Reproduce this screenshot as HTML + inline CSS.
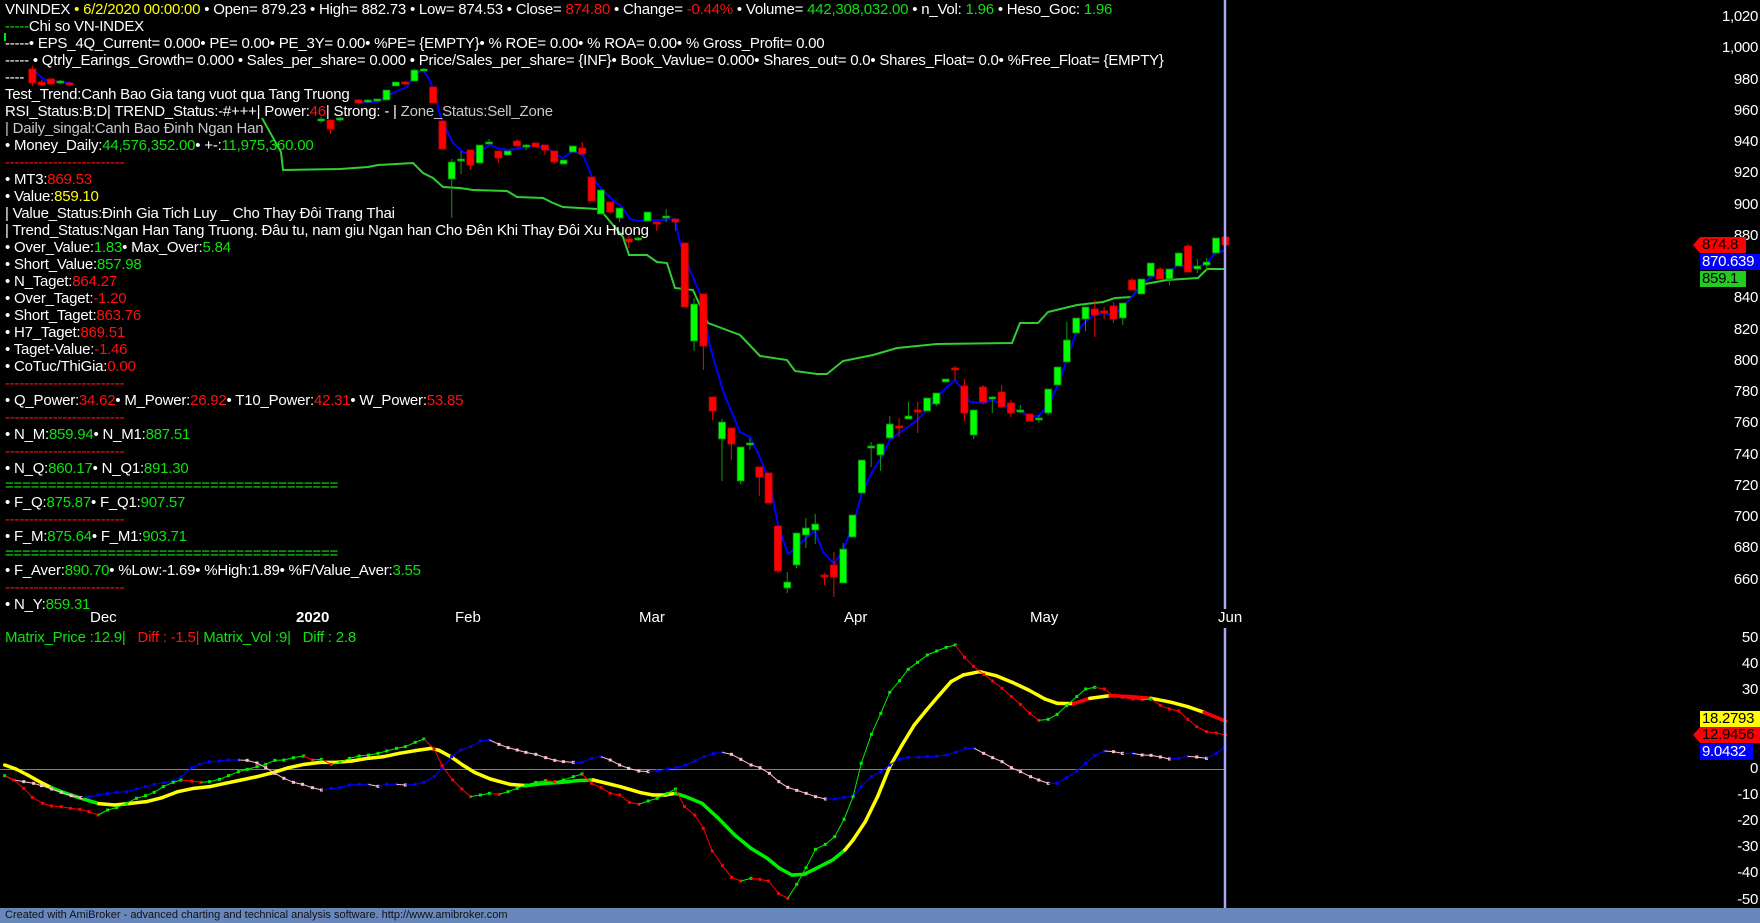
<!DOCTYPE html>
<html><head><meta charset="utf-8">
<style>
html,body{margin:0;padding:0;background:#000;}
body{width:1760px;height:923px;overflow:hidden;position:relative;font-family:"Liberation Sans",Arial,sans-serif;}
#svg{position:absolute;left:0;top:0;}
.t{position:absolute;left:5px;white-space:pre;font-size:15px;line-height:17px;color:#fff;letter-spacing:-0.22px;margin-top:1px;}
.w{color:#fff}.y{color:#ffff00}.r{color:#ff1010}.g{color:#10e010}.s{color:#c8c8c8}
.ax{position:absolute;right:2px;font-size:15px;line-height:17px;color:#fff;text-align:right;letter-spacing:-0.3px;}
.dt{position:absolute;font-size:15px;line-height:17px;color:#fff;}
.tag{position:absolute;font-size:15px;line-height:16px;height:16px;padding:0 2px;text-align:left;letter-spacing:-0.3px;}
#bar{position:absolute;left:0;top:908px;width:1760px;height:15px;background:#6888bc;font-size:11px;line-height:15px;color:#111;padding-left:5px;box-sizing:border-box;}
</style></head><body>
<svg id="svg" width="1760" height="923" xmlns="http://www.w3.org/2000/svg"></svg>

<div class="t" style="top:0px"><span class="w">VNINDEX</span><span class="y"> • 6/2/2020 00:00:00</span> • Open= 879.23 • High= 882.73 • Low= 874.53 • Close= <span class="r">874.80</span> • Change= <span class="r">-0.44%</span> • Volume= <span class="g">442,308,032.00</span> • n_Vol: <span class="g">1.96</span> • Heso_Goc: <span class="g">1.96</span></div>
<div class="t" style="top:17px"><span class="g">-----</span>Chi so VN-INDEX</div>
<div class="t" style="top:34px">-----• EPS_4Q_Current= 0.000• PE= 0.00• PE_3Y= 0.00• %PE= {EMPTY}• % ROE= 0.00• % ROA= 0.00• % Gross_Profit= 0.00</div>
<div class="t" style="top:51px">----- • Qtrly_Earings_Growth= 0.000 • Sales_per_share= 0.000 • Price/Sales_per_share= {INF}• Book_Vavlue= 0.000• Shares_out= 0.0• Shares_Float= 0.0• %Free_Float= {EMPTY}</div>
<div class="t" style="top:68px">----</div>
<div class="t" style="top:85px">Test_Trend:Canh Bao Gia tang vuot qua Tang Truong</div>
<div class="t" style="top:102px">RSI_Status:B:D| TREND_Status:-#+++| Power:<span class="r">46</span>| Strong: - | <span class="s">Zone_Status:Sell_Zone</span></div>
<div class="t s" style="top:119px">| Daily_singal:Canh Bao Đinh Ngan Han</div>
<div class="t" style="top:136px">• Money_Daily:<span class="g">44,576,352.00</span>• +-:<span class="g">11,975,360.00</span></div>
<div class="t r" style="top:153px">-------------------------</div>
<div class="t" style="top:170px">• MT3:<span class="r">869.53</span></div>
<div class="t" style="top:187px">• Value:<span class="y">859.10</span></div>
<div class="t" style="top:204px">| Value_Status:Đinh Gia Tich Luy _ Cho Thay Đôi Trang Thai</div>
<div class="t" style="top:221px">| Trend_Status:Ngan Han Tang Truong. Đâu tu, nam giu Ngan han Cho Đên Khi Thay Đôi Xu Huong</div>
<div class="t" style="top:238px">• Over_Value:<span class="g">1.83</span>• Max_Over:<span class="g">5.84</span></div>
<div class="t" style="top:255px">• Short_Value:<span class="g">857.98</span></div>
<div class="t" style="top:272px">• N_Taget:<span class="r">864.27</span></div>
<div class="t" style="top:289px">• Over_Taget:<span class="r">-1.20</span></div>
<div class="t" style="top:306px">• Short_Taget:<span class="r">863.76</span></div>
<div class="t" style="top:323px">• H7_Taget:<span class="r">869.51</span></div>
<div class="t" style="top:340px">• Taget-Value:<span class="r">-1.46</span></div>
<div class="t" style="top:357px">• CoTuc/ThiGia:<span class="r">0.00</span></div>
<div class="t r" style="top:374px">-------------------------</div>
<div class="t" style="top:391px">• Q_Power:<span class="r">34.62</span>• M_Power:<span class="r">26.92</span>• T10_Power:<span class="r">42.31</span>• W_Power:<span class="r">53.85</span></div>
<div class="t r" style="top:408px">-------------------------</div>
<div class="t" style="top:425px">• N_M:<span class="g">859.94</span>• N_M1:<span class="g">887.51</span></div>
<div class="t r" style="top:442px">-------------------------</div>
<div class="t" style="top:459px">• N_Q:<span class="g">860.17</span>• N_Q1:<span class="g">891.30</span></div>
<div class="t g" style="top:476px">=======================================</div>
<div class="t" style="top:493px">• F_Q:<span class="g">875.87</span>• F_Q1:<span class="g">907.57</span></div>
<div class="t r" style="top:510px">-------------------------</div>
<div class="t" style="top:527px">• F_M:<span class="g">875.64</span>• F_M1:<span class="g">903.71</span></div>
<div class="t g" style="top:544px">=======================================</div>
<div class="t" style="top:561px">• F_Aver:<span class="g">890.70</span>• %Low:-1.69• %High:1.89• %F/Value_Aver:<span class="g">3.55</span></div>
<div class="t r" style="top:578px">-------------------------</div>
<div class="t" style="top:595px">• N_Y:<span class="g">859.31</span></div>

<div class="dt" style="left:90px;top:609px">Dec</div>
<div class="dt" style="left:296px;top:609px;font-weight:bold">2020</div>
<div class="dt" style="left:455px;top:609px">Feb</div>
<div class="dt" style="left:639px;top:609px">Mar</div>
<div class="dt" style="left:844px;top:609px">Apr</div>
<div class="dt" style="left:1030px;top:609px">May</div>
<div class="dt" style="left:1218px;top:609px">Jun</div>

<div class="t" style="top:628px"><span class="g">Matrix_Price :12.9|</span>   <span class="r">Diff : -1.5|</span><span class="g"> Matrix_Vol :9|   Diff : 2.8</span></div>

<div class="ax" style="top:8px">1,020</div>
<div class="ax" style="top:39px">1,000</div>
<div class="ax" style="top:71px">980</div>
<div class="ax" style="top:102px">960</div>
<div class="ax" style="top:133px">940</div>
<div class="ax" style="top:164px">920</div>
<div class="ax" style="top:196px">900</div>
<div class="ax" style="top:227px">880</div>
<div class="ax" style="top:289px">840</div>
<div class="ax" style="top:321px">820</div>
<div class="ax" style="top:352px">800</div>
<div class="ax" style="top:383px">780</div>
<div class="ax" style="top:414px">760</div>
<div class="ax" style="top:446px">740</div>
<div class="ax" style="top:477px">720</div>
<div class="ax" style="top:508px">700</div>
<div class="ax" style="top:539px">680</div>
<div class="ax" style="top:571px">660</div>

<div class="ax" style="top:629px">50</div>
<div class="ax" style="top:655px">40</div>
<div class="ax" style="top:681px">30</div>
<div class="ax" style="top:760px">0</div>
<div class="ax" style="top:786px">-10</div>
<div class="ax" style="top:812px">-20</div>
<div class="ax" style="top:838px">-30</div>
<div class="ax" style="top:864px">-40</div>
<div class="ax" style="top:891px">-50</div>

<div class="tag" style="left:1700px;top:237px;width:42px;background:#ff0000;color:#000">874.8</div>
<div class="tag" style="left:1700px;top:254px;width:56px;background:#0000ff;color:#fff">870.639</div>
<div class="tag" style="left:1700px;top:271px;width:42px;background:#22cc22;color:#000">859.1</div>
<div class="tag" style="left:1700px;top:711px;width:56px;background:#ffff00;color:#000">18.2793</div>
<div class="tag" style="left:1700px;top:727px;width:56px;background:#ff0000;color:#000">12.9456</div>
<div class="tag" style="left:1700px;top:744px;width:49px;background:#0000ff;color:#fff">9.0432</div>

<div id="bar">Created with AmiBroker - advanced charting and technical analysis software. http://www.amibroker.com</div>

<script>
(function(){
var S=document.getElementById('svg'),h='';
function X(k){return 1225.3-9.32*k;}
h+='<polygon points="1693,245 1700,237 1700,253" fill="#ff0000"/>';
h+='<polygon points="1693,735 1700,727 1700,743" fill="#ff0000"/>';
h+='<line x1="0" y1="769.5" x2="1225" y2="769.5" stroke="#808080" stroke-width="1"/>';
var gp=[[262,118],[281,152],[283,170],[340,169],[368,167],[378,165],[413,163],[423,173],[433,178],[443,187],[460,188],[473,190],[507,191],[517,197],[543,198],[553,203],[563,207],[597,209],[603,213],[623,237],[629,255],[647,255],[657,262],[667,263],[675,288],[693,290],[708,323],[740,335],[760,356],[787,360],[795,371],[817,374],[827,374],[843,361],[873,355],[897,348],[937,344],[1012,343],[1020,323],[1038,323],[1048,312],[1077,305],[1103,302],[1115,298],[1132,297],[1137,290],[1145,284],[1167,280],[1198,278],[1207,269],[1225,269]];
h+='<polyline fill="none" stroke="#33cc33" stroke-width="2" points="'+gp.join(' ')+'"/>';
var bp=[[33,70],[45,80],[71,83],[358,102],[377,102],[387,96],[397,91],[407,87],[415,74],[423,70],[428,77],[435,93],[440,115],[447,131],[453,143],[463,152],[472,155],[480,151],[490,145],[500,149],[510,150],[520,148],[533,146],[547,148],[557,155],[563,158],[573,151],[583,155],[592,177],[603,191],[613,200],[622,207],[630,219],[638,221],[660,220],[675,219],[680,243],[690,270],[700,294],[710,346],[723,391],[740,432],[750,437],[758,453],[765,470],[772,493],[778,525],[788,554],[797,547],[807,537],[815,531],[823,552],[834,564],[843,550],[853,525],[862,493],[872,472],[881,458],[890,440],[899,433],[908,427],[917,420],[927,410],[936,398],[946,388],[955,380],[964,392],[970,402],[983,403],[992,400],[1001,404],[1011,408],[1020,411],[1029,416],[1038,416],[1048,406],[1057,387],[1067,360],[1076,333],[1085,322],[1094,315],[1104,313],[1113,315],[1122,307],[1132,297],[1141,285],[1151,277],[1160,274],[1169,272],[1178,265],[1188,267],[1198,267],[1207,263],[1216,252],[1225,251]];
h+='<polyline fill="none" stroke="#0000ff" stroke-width="2" points="33,70 45,80 71,83"/>';
h+='<polyline fill="none" stroke="#0000ff" stroke-width="2" points="'+bp.slice(3).join(' ')+'"/>';
var C=[[128,69,83,66,86,'r'],[127,82,85,80,86,'r'],[126,79,84,78,85,'r'],[125,82,82,80,84,'g'],[124,83,85,82,86,'r'],
[97,120,120,117,123,'g'],[96,120,129,120,134,'r'],[95,119,119,117,122,'g'],[93,100,103,99,104,'r'],[92,101,101,99,103,'g'],[91,100,101,100,102,'g'],[90,90,100,90,100,'g'],[89,82,86,82,86,'g'],[88,83,83,81,85,'r'],[87,70,81,69,81,'g'],[86,70,70,68,71,'g'],[85,87,103,87,103,'r'],[84,121,149,121,149,'r'],[83,162,179,159,218,'g'],[82,160,160,151,174,'g'],[81,150,165,150,170,'r'],[80,145,163,145,163,'g'],[79,142,144,139,144,'g'],[78,151,158,151,163,'r'],[77,151,155,151,155,'g'],[76,141,146,139,146,'r'],[75,146,146,144,150,'g'],[74,143,147,143,147,'r'],[73,145,150,145,155,'r'],[72,151,162,151,164,'r'],[71,160,164,160,164,'g'],[70,146,152,146,152,'g'],[69,148,154,142,154,'r'],[68,177,201,177,201,'r'],[67,190,214,190,214,'g'],[66,202,212,202,214,'r'],[65,208,218,208,222,'g'],[64,239,242,236,248,'r'],[63,239,239,237,241,'g'],[62,212,221,212,221,'g'],[61,222,224,222,231,'r'],[60,217,217,209,222,'g'],[59,219,222,219,231,'r'],[58,243,307,243,307,'r'],[57,304,341,298,351,'g'],[56,294,346,294,370,'r'],[55,397,411,397,420,'r'],[54,422,439,419,481,'g'],[53,428,444,428,460,'r'],[52,447,481,447,484,'g'],
[51,444,444,438,450,'g'],[50,467,477,467,496,'r'],[49,473,503,473,503,'r'],[48,526,571,526,573,'r'],[47,582,588,572,593,'g'],[46,533,565,533,568,'g'],[45,528,535,518,548,'g'],[44,524,530,514,544,'g'],[43,576,576,573,585,'r'],[42,565,577,552,597,'r'],[41,549,583,543,583,'g'],[40,515,537,515,537,'g'],[39,460,493,460,493,'g'],[38,446,448,442,467,'g'],[37,444,455,444,471,'g'],[36,424,438,416,438,'g'],[35,427,427,418,437,'r'],[34,416,419,402,419,'g'],[33,411,411,402,433,'r'],[32,398,411,398,411,'g'],[31,393,404,393,406,'g'],[30,379,382,379,382,'g'],[29,369,369,366,380,'r'],[28,386,413,379,421,'r'],[27,410,435,410,439,'g'],[26,387,402,385,404,'r'],[25,398,398,396,413,'g'],[24,392,407,385,407,'r'],[23,403,413,400,417,'r'],[22,411,411,405,413,'g'],[21,414,421,414,421,'r'],[20,419,419,415,423,'g'],[19,389,413,389,415,'g'],[18,367,385,367,385,'g'],[17,340,362,322,362,'g'],[16,318,333,318,333,'g'],[15,307,319,307,331,'g'],[14,309,315,300,337,'r'],[13,312,312,307,319,'r'],[12,306,319,302,323,'r'],[11,303,318,303,325,'g'],[10,280,290,278,290,'r'],[9,279,294,279,294,'g'],[8,263,276,263,276,'g'],[7,269,279,267,279,'r'],[6,269,279,269,285,'g'],[5,253,266,253,266,'g'],[4,246,272,244,272,'r'],[3,266,269,259,273,'g'],[2,262,265,258,270,'g'],[1,238,253,238,253,'g'],[0,237,245,233,245,'r']];
for(var i=0;i<C.length;i++){var c=C[i],x=X(c[0]),col=c[5]=='g'?'#00ff00':'#ff0000',wc=c[5]=='g'?'#119911':'#ff0000';
h+='<line x1="'+x+'" y1="'+c[3]+'" x2="'+x+'" y2="'+c[4]+'" stroke="'+wc+'" stroke-width="1"/>';
var bh=Math.max(2,c[2]-c[1]);
h+='<rect x="'+(x-3.5)+'" y="'+(c[2]-c[1]<2?c[1]-1:c[1])+'" width="7" height="'+bh+'" fill="'+col+'" stroke="'+(c[5]=='g'?'#117711':'#cc0000')+'" stroke-width="0.8"/>';}
function cv6(a){var o=[];for(var i=0;i<a.length;i+=2)o.push([a[i]/2.529,a[i+1]/3+625]);return o;}
function cv7(a){var o=[];for(var i=0;i<a.length;i+=2){var x=a[i]/2.45+600;if(x>603)o.push([x,a[i+1]/3+625]);}return o;}
var A=cv6([12,452,35,465,60,470,85,475,105,482,130,492,155,502,180,512,205,518,225,516,248,510,272,506,295,502,320,500,345,492,368,485,390,478,415,473,438,468,458,455,485,428,505,418,530,410,555,408,578,405,603,405,625,406,650,414,672,428,695,445,718,460,742,472,765,478,790,488,813,495,838,490,860,488,884,480,908,478,932,478,956,484,978,478,1003,478,1025,480,1050,478,1072,472,1098,455,1118,430,1142,395,1165,375,1190,365,1215,348,1238,345,1262,358,1285,368,1308,375,1330,382,1355,388,1380,398,1403,406,1425,410,1450,412,1472,412,1496,400,1520,395]).concat(cv7([0,395,25,405,48,420,70,430,95,438,118,440,140,438,165,432,188,428,210,420,232,408,255,395,278,386,300,382,322,388,345,403,370,420,392,428,415,445,438,470,460,487,482,496,505,505,528,515,552,522,575,522,598,517,620,515,640,485,665,455,688,440,710,420,734,402,755,397,780,397,802,395,825,394,848,390,872,382,895,370,917,370,940,385,962,398,985,410,1008,428,1030,440,1055,455,1075,465,1098,475,1120,475,1143,458,1168,438,1190,415,1212,392,1236,378,1258,380,1280,385,1305,385,1328,390,1350,391,1373,396,1395,402,1418,400,1440,394,1462,396,1486,400,1510,385,1532,365]));
var B=cv6([12,452,35,465,60,490,82,517,108,535,130,543,155,545,178,550,202,553,225,560,248,570,272,555,295,548,320,535,345,520,368,512,390,502,413,485,438,472,458,465,485,468,508,472,530,470,555,463,578,452,603,440,625,433,650,425,672,418,695,406,718,405,742,398,768,393,790,405,813,403,838,418,860,412,884,400,908,393,932,390,956,385,978,378,1003,370,1025,365,1050,352,1072,342,1098,372,1118,422,1145,465,1168,492,1190,515,1215,510,1238,505,1262,508,1285,500,1308,490,1330,480,1355,472,1380,467,1403,470,1425,465,1450,455,1472,447,1496,475,1520,488]).concat(cv7([0,485,25,505,48,510,72,532,95,538,118,528,140,520,165,505,185,492,207,545,232,570,253,610,275,678,300,722,322,757,345,768,370,760,392,763,413,768,437,805,460,820,482,778,505,728,528,673,552,658,575,635,598,583,620,515,640,415,665,328,688,265,710,202,734,167,755,133,778,112,802,90,825,78,848,67,870,60,893,97,915,124,940,148,962,168,985,190,1008,215,1030,238,1053,265,1075,286,1098,283,1120,268,1143,242,1168,215,1190,192,1212,187,1236,192,1258,212,1280,217,1305,222,1328,224,1350,222,1373,241,1395,252,1418,258,1440,283,1462,305,1486,320,1510,324,1532,330]));
var T=cv6([12,420,40,432,70,450,100,470,130,488,160,502,200,518,250,536,290,540,330,535,370,530,410,518,450,500,490,490,530,485,570,475,610,465,650,455,690,443,730,428,770,418,810,412,850,412,890,408,930,400,970,395,1010,385,1050,377,1090,370,1110,376,1140,395,1170,420,1200,442,1240,462,1290,478,1330,482,1380,475,1420,472,1460,467,1500,465]).concat(cv7([0,470,50,485,100,503,130,510,160,510,185,505,210,515,250,535,290,580,330,630,370,670,410,700,440,730,470,750,500,748,530,730,570,705,600,675,620,645,650,590,680,515,710,425,740,360,770,300,800,255,830,212,860,170,890,150,930,140,970,152,1010,172,1050,195,1090,222,1120,235,1160,236,1200,220,1250,212,1300,215,1350,220,1400,232,1440,245,1480,262,1532,288]));
function tc(x){if(x>51&&x<103)return '#00ee00';if(x>675&&x<845)return '#00ee00';if(x>1073&&x<1094)return '#ff0000';if(x>1114&&x<1151)return '#ff0000';if(x>1204)return '#ff0000';if(x>520&&x<600)return '#00ee00';return '#ffff00';}
for(var i=1;i<T.length;i++){h+='<line x1="'+T[i-1][0]+'" y1="'+T[i-1][1]+'" x2="'+T[i][0]+'" y2="'+T[i][1]+'" stroke="'+tc((T[i-1][0]+T[i][0])/2)+'" stroke-width="3.5" stroke-linecap="round"/>';}
function thin(P,up,dn){for(var i=0;i<P.length;i++){var col=i>0&&P[i][1]>P[i-1][1]+0.3?dn:up;if(i>0)h+='<line x1="'+P[i-1][0]+'" y1="'+P[i-1][1]+'" x2="'+P[i][0]+'" y2="'+P[i][1]+'" stroke="'+col+'" stroke-width="1"/>';h+='<rect x="'+(P[i][0]-1.5)+'" y="'+(P[i][1]-1.5)+'" width="3" height="3" fill="'+col+'"/>';}}
thin(A,'#0000ff','#ffc0cb');
thin(B,'#00ee00','#ff0000');
h+='<line x1="1225" y1="0" x2="1225" y2="609" stroke="#a8a8f0" stroke-width="2.5"/>';
h+='<line x1="1225" y1="628" x2="1225" y2="908" stroke="#a8a8f0" stroke-width="2.5"/>';
h+='<rect x="4" y="33" width="2" height="8" fill="#00ee00"/>';
S.innerHTML=h;
})();
</script>
</body></html>
